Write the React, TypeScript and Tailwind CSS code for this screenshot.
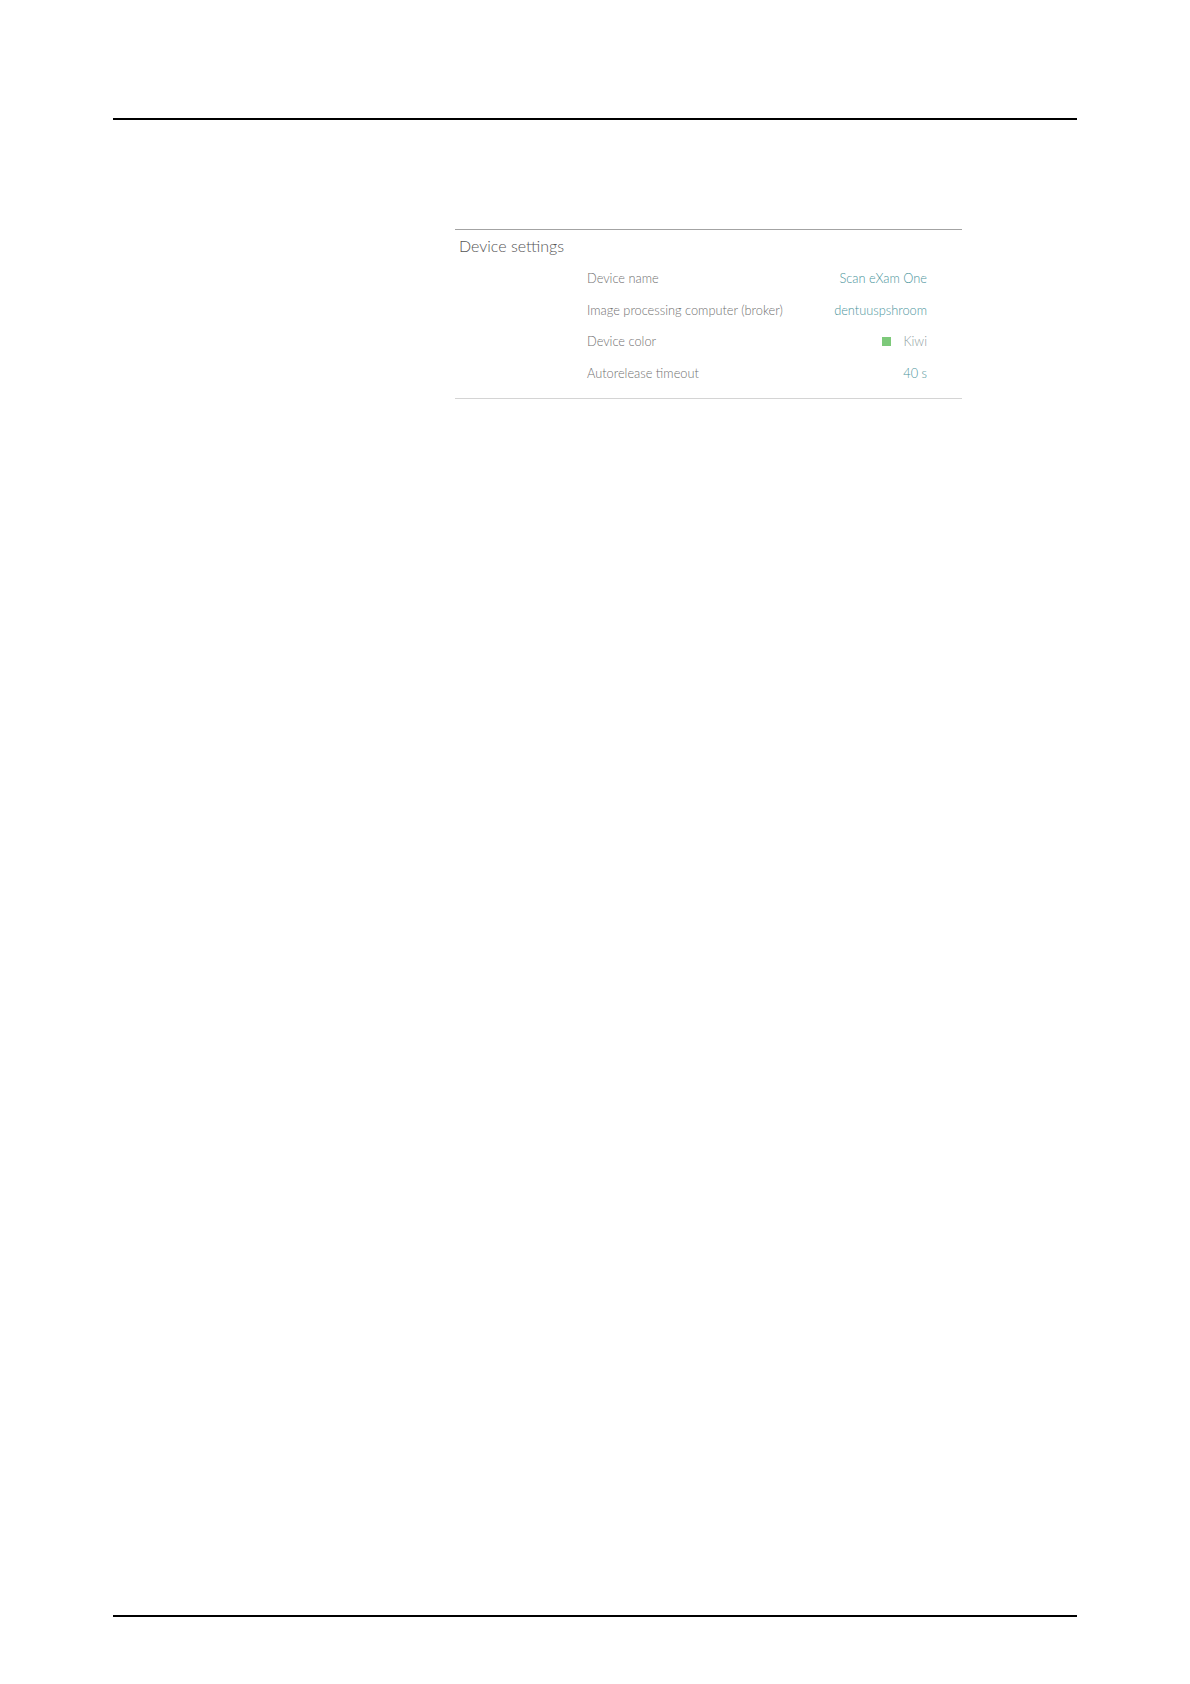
import React from "react";

const rows: { label: string; value: string; swatch?: boolean; muted?: boolean }[] = [
  { label: "Device name", value: "Scan eXam One" },
  { label: "Image processing computer (broker)", value: "dentuuspshroom" },
  { label: "Device color", value: "Kiwi", swatch: true, muted: true },
  { label: "Autorelease timeout", value: "40 s" },
];

export default function App() {
  return (
    <div
      className="w-[1190px] h-[1684px] bg-white flex flex-col"
      style={{ fontFamily: "Lato, 'Open Sans', 'Liberation Sans', sans-serif" }}
    >
      <div className="mx-[113px] mt-[118px] border-t-2 border-black" />
      <div className="flex-1 pt-[109px] pl-[455px]">
        <div className="w-[507px] border-t border-[#a3a3a3] border-b border-b-[#d4d4d4] pb-[9px]">
          <div className="pt-[4px] pl-[4px] text-[16px] leading-[24px] font-light text-[#555]">
            Device settings
          </div>
          <div className="mt-[5px] pl-[132px] pr-[35px]">
            {rows.map((r) => (
              <div key={r.label} className="flex items-center justify-between h-[31.5px] text-[12.8px] leading-[31.5px] font-light">
                <span className="text-[#707070]">{r.label}</span>
                <span className="flex items-center">
                  {r.swatch && <span className="inline-block w-[9px] h-[9px] bg-[#7dc97a] mr-[12px]" />}
                  <span className={r.muted ? "text-[#8c9c9e]" : "text-[#4a949b]"}>{r.value}</span>
                </span>
              </div>
            ))}
          </div>
        </div>
      </div>
      <div className="mx-[113px] mb-[67px] border-t-2 border-black" />
    </div>
  );
}
